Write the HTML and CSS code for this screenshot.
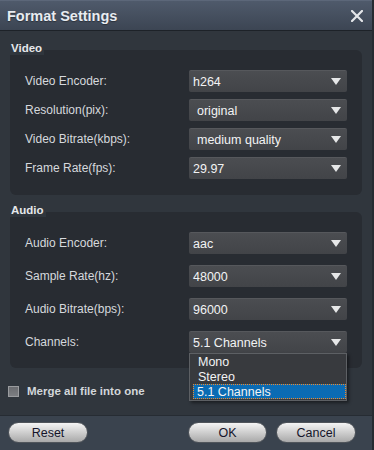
FILE: index.html
```html
<!DOCTYPE html>
<html lang="en">
<head>
<meta charset="UTF-8" />
<meta name="viewport" content="width=device-width, initial-scale=1" />
<title>Format Settings</title>
<link rel="stylesheet" href="styles.css">
</head>
<body>

<div class="dialog">
  <div class="titlebar">
    <h1>Format Settings</h1>
    <button class="close" title="Close">
      <svg width="12" height="12" viewBox="0 0 12 12"><path d="M1 1L11 11M11 1L1 11" stroke="#e4e6e9" stroke-width="2.2" stroke-linecap="square"/></svg>
    </button>
  </div>

  <div class="content">
    <div class="group-title">Video</div>
    <div class="group video">
      <label>Video Encoder:</label>
      <div class="select"><span>h264</span><i class="arrow"></i></div>
      <label>Resolution(pix):</label>
      <div class="select"><span class="pad">original</span><i class="arrow"></i></div>
      <label>Video Bitrate(kbps):</label>
      <div class="select"><span class="pad">medium quality</span><i class="arrow"></i></div>
      <label>Frame Rate(fps):</label>
      <div class="select"><span>29.97</span><i class="arrow"></i></div>
    </div>

    <div class="group-title audio-title">Audio</div>
    <div class="group audio">
      <label>Audio Encoder:</label>
      <div class="select"><span>aac</span><i class="arrow"></i></div>
      <label>Sample Rate(hz):</label>
      <div class="select"><span>48000</span><i class="arrow"></i></div>
      <label>Audio Bitrate(bps):</label>
      <div class="select"><span>96000</span><i class="arrow"></i></div>
      <label>Channels:</label>
      <div class="select open"><span>5.1 Channels</span><i class="arrow"></i>
        <ul class="options">
          <li>Mono</li>
          <li>Stereo</li>
          <li class="selected">5.1 Channels</li>
        </ul>
      </div>
    </div>

    <div class="merge">
      <span class="checkbox"></span>
      <span>Merge all file into one</span>
    </div>
  </div>

  <div class="footer">
    <button class="btn">Reset</button>
    <div class="actions">
      <button class="btn">OK</button>
      <button class="btn">Cancel</button>
    </div>
  </div>
</div>

</body>
</html>
```

FILE: styles.css
```css
* {
  box-sizing: border-box;
}

body {
  margin: 0;
  background: #30363d;
  font-family: "Liberation Sans", Arial, sans-serif;
  color: #dfe2e6;
}

.dialog {
  width: 374px;
  height: 450px;
  display: flex;
  flex-direction: column;
  background: #30363d;
  border-right: 2px solid #262b31;
  overflow: hidden;
}

.titlebar {
  height: 31px;
  flex: none;
  display: flex;
  align-items: center;
  justify-content: space-between;
  padding: 0 9px 0 7px;
  background: linear-gradient(#4f5a6b, #3c4553);
  border-top: 1px solid #5c6779;
  border-bottom: 1px solid #1d2228;
}
.titlebar h1 {
  margin: 0;
  font-size: 14.5px;
  font-weight: 700;
  color: #e8ecf1;
  text-shadow: 0 1px 1px rgba(0,0,0,0.35);
}

.close {
  background: none;
  border: none;
  padding: 0;
  width: 12px;
  height: 12px;
  display: flex;
  cursor: pointer;
}

.content {
  flex: 1;
  padding: 9px 10px 0 10px;
}

.group-title {
  width: fit-content;
  position: relative;
  z-index: 1;
  height: 15px;
  margin-bottom: -5px;
  padding: 1px 2px 0 1px;
  background: #30363d;
  font-size: 11.5px;
  font-weight: 700;
  line-height: 14px;
  color: #e6e8eb;
}
.audio-title {
  margin-top: 7px;
}

.group {
  display: grid;
  grid-template-columns: 1fr 158px;
  grid-auto-rows: 22px;
  align-items: center;
  background: #282c32;
  border-radius: 6px;
  padding: 20px 15px 16px 15px;
}
.group.video {
  row-gap: 7px;
}
.group.audio {
  row-gap: 11px;
  padding-bottom: 15px;
}

.group label {
  font-size: 12px;
  color: #d6d9dd;
}

.select {
  position: relative;
  height: 22px;
  display: flex;
  align-items: center;
  justify-content: space-between;
  padding: 0 6px 0 4px;
  background: linear-gradient(#4b4d51, #424448);
  border-top: 1px solid #56585c;
  border-radius: 2px;
  font-size: 12.5px;
  color: #f2f3f4;
}
.select .pad {
  padding-left: 4px;
}

.arrow {
  width: 0;
  height: 0;
  border-left: 5px solid transparent;
  border-right: 5px solid transparent;
  border-top: 7px solid #e6e7e8;
}

.options {
  position: absolute;
  top: 21px;
  left: 0;
  width: 158px;
  margin: 0;
  padding: 0 0 1px 3px;
  list-style: none;
  background: #383a3e;
  border: 1px solid #5d6064;
  box-shadow: 2px 2px 3px rgba(0,0,0,0.45);
  z-index: 5;
}
.options li {
  height: 15px;
  line-height: 14px;
  padding-left: 4px;
  font-size: 12.5px;
  color: #f2f3f4;
  border: 1px solid transparent;
}
.options li.selected {
  background: #0b6bb3;
  border: 1px dotted #f08a2a;
  padding-left: 3px;
}

.merge {
  display: flex;
  align-items: center;
  gap: 8px;
  margin: 17px 0 0 -2px;
  height: 12px;
  font-size: 11.5px;
  font-weight: 700;
  color: #d3d6da;
}
.checkbox {
  width: 11px;
  height: 11px;
  background: linear-gradient(#6a6c70, #7c7e82);
  border: 1px solid #9a9c9f;
}

.footer {
  height: 35px;
  flex: none;
  display: flex;
  justify-content: space-between;
  padding: 6px 16px 0 8px;
  background: #3a434e;
  border-top: 1px solid #262c33;
}
.actions {
  display: flex;
  gap: 9px;
}

.btn {
  width: 80px;
  height: 21px;
  padding: 0;
  border: 1px solid #50555b;
  border-radius: 11px;
  background: linear-gradient(#f4f4f4, #d2d2d2 45%, #a9a9a9);
  font-family: "Liberation Sans", Arial, sans-serif;
  font-size: 12.5px;
  color: #15152a;
  cursor: pointer;
}
.actions .btn:first-child {
  width: 79px;
}
```
